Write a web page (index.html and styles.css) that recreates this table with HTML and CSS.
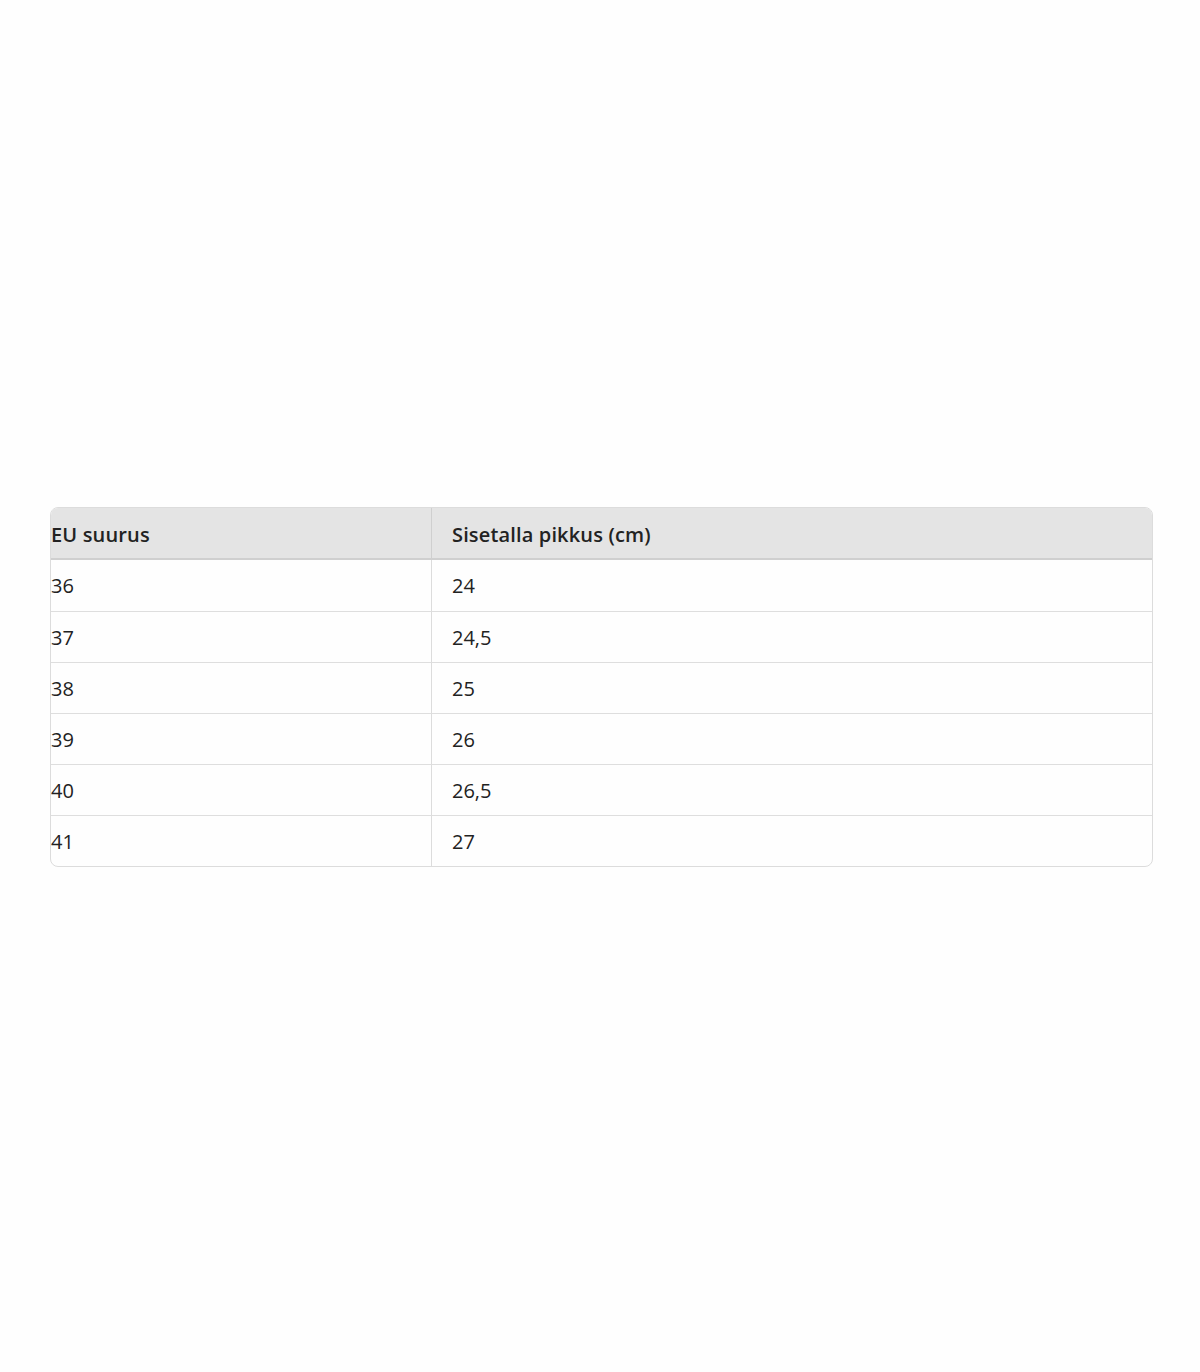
FILE: index.html
```html
<!DOCTYPE html>
<html lang="fi">
<head>
<meta charset="utf-8">
<link rel="stylesheet" href="styles.css">
</head>
<body>
<div class="page">
  <table class="size-table">
    <thead>
      <tr><th>EU suurus</th><th>Sisetalla pikkus (cm)</th></tr>
    </thead>
    <tbody>
      <tr><td>36</td><td>24</td></tr>
      <tr><td>37</td><td>24,5</td></tr>
      <tr><td>38</td><td>25</td></tr>
      <tr><td>39</td><td>26</td></tr>
      <tr><td>40</td><td>26,5</td></tr>
      <tr><td>41</td><td>27</td></tr>
    </tbody>
  </table>
</div>
</body>
</html>
```
FILE: styles.css
```css
html, body {
  margin: 0;
  background: #fefefe;
}
.page {
  padding: 507px 47px 0 50px;
}
.size-table {
  width: 1103px;
  border-collapse: separate;
  border-spacing: 0;
  border: 1px solid #dcdcdc;
  border-radius: 8px;
  overflow: hidden;
  font-family: "Open Sans", "Noto Sans", sans-serif;
  font-size: 20px;
  color: #222;
}
.size-table th,
.size-table td {
  height: 51px;
  padding: 0 0 0 20px;
  text-align: left;
  vertical-align: middle;
  box-sizing: border-box;
}
.size-table th:first-child,
.size-table td:first-child {
  padding-left: 0;
  width: 381px;
  border-right: 1px solid #dcdcdc;
}
.size-table th {
  height: 52px;
  padding-top: 2px;
  background: #e4e4e4;
  font-weight: 600;
  letter-spacing: 0.15px;
  border-bottom: 2px solid #cfcfcf;
}
.size-table th:first-child {
  border-right-color: #cfcfcf;
}
.size-table tbody td {
  border-top: 1px solid #dedede;
  padding-top: 0;
}
.size-table tbody tr:first-child td {
  border-top: none;
}
```
